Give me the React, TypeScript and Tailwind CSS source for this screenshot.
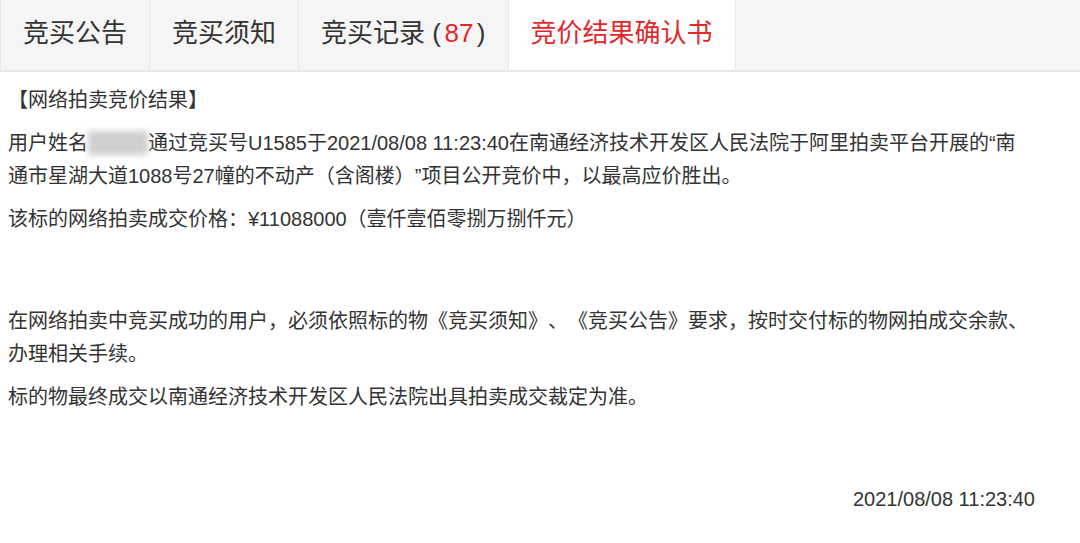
import { ReactNode } from 'react'

const font = 'font-["Liberation_Sans","Noto_Sans_CJK_SC",sans-serif]'

interface TabProps {
  children: ReactNode
  active?: boolean
}

function Tab({ children, active }: TabProps) {
  return (
    <div
      className={
        active
          ? 'h-[70px] px-[22px] pb-[3px] flex items-center border-r border-[#e6e6e6] bg-white text-[#e4272b] text-[26px]'
          : 'h-[70px] px-[22px] pb-[3px] flex items-center border-r border-[#e6e6e6] bg-[#f5f5f5] text-[#333] text-[26px]'
      }
    >
      {children}
    </div>
  )
}

function Para({ children }: { children: ReactNode }) {
  return <p className="mb-[10px] leading-[33px]">{children}</p>
}

export default function App() {
  return (
    <div className={`w-[1080px] h-[543px] bg-white overflow-hidden ${font}`}>
      {/* Tab bar */}
      <div className="flex bg-[#f5f5f5] border-l border-[#e6e6e6] border-b-2 border-b-[#e8e8e8]">
        <Tab>竞买公告</Tab>
        <Tab>竞买须知</Tab>
        <Tab>
          竞买记录 ( <span className="text-[#e4272b] mx-[3.5px]">87</span> )
        </Tab>
        <Tab active>竞价结果确认书</Tab>
      </div>

      {/* Confirmation content */}
      <div className="pl-2 pr-[45px] pt-[12px] text-[20px] text-[#333] [text-spacing-trim:space-all]">
        <Para>【网络拍卖竞价结果】</Para>
        <Para>
          用户姓名
          <span className="inline-block w-[60px] h-[24px] align-[-5px] bg-[#cfcfcf] blur-[3px]" />
          通过竞买号U1585于2021/08/08 11:23:40在南通经济技术开发区人民法院于阿里拍卖平台开展的“南
          <br />
          通市星湖大道1088号27幢的不动产（含阁楼）”项目公开竞价中，以最高应价胜出。
        </Para>
        <Para>该标的网络拍卖成交价格：¥11088000（壹仟壹佰零捌万捌仟元）</Para>

        <div className="h-[59px]" />

        <Para>
          在网络拍卖中竞买成功的用户，必须依照标的物《竞买须知》、《竞买公告》要求，按时交付标的物网拍成交余款、
          <br />
          办理相关手续。
        </Para>
        <Para>标的物最终成交以南通经济技术开发区人民法院出具拍卖成交裁定为准。</Para>

        <div className="h-[59px]" />

        <p className="text-right leading-[33px]">2021/08/08 11:23:40</p>
      </div>
    </div>
  )
}
